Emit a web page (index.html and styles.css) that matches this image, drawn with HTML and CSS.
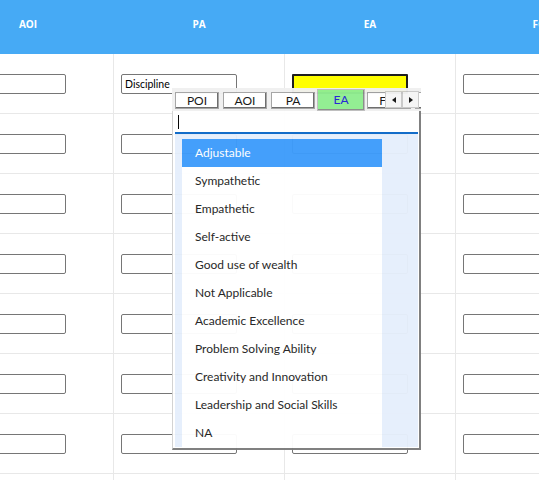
FILE: index.html
```html
<!DOCTYPE html>
<html>
<head>
<meta charset="utf-8">
<link rel="stylesheet" href="styles.css">
</head>
<body>
<div class="viewport">
  <div class="grid">
    <div class="hcell">AOI</div>
    <div class="hcell">PA</div>
    <div class="hcell">EA</div>
    <div class="hcell">FOI</div>

    <div class="cell"><div class="field"></div></div>
    <div class="cell"><div class="field">Discipline</div></div>
    <div class="cell"><div class="field field-active"></div></div>
    <div class="cell"><div class="field"></div></div>

    <div class="cell"><div class="field"></div></div>
    <div class="cell"><div class="field"></div></div>
    <div class="cell"><div class="field"></div></div>
    <div class="cell"><div class="field"></div></div>

    <div class="cell"><div class="field"></div></div>
    <div class="cell"><div class="field"></div></div>
    <div class="cell"><div class="field"></div></div>
    <div class="cell"><div class="field"></div></div>

    <div class="cell"><div class="field"></div></div>
    <div class="cell"><div class="field"></div></div>
    <div class="cell"><div class="field"></div></div>
    <div class="cell"><div class="field"></div></div>

    <div class="cell"><div class="field"></div></div>
    <div class="cell"><div class="field"></div></div>
    <div class="cell"><div class="field"></div></div>
    <div class="cell"><div class="field"></div></div>

    <div class="cell"><div class="field"></div></div>
    <div class="cell"><div class="field"></div></div>
    <div class="cell"><div class="field"></div></div>
    <div class="cell"><div class="field"></div></div>

    <div class="cell"><div class="field"></div></div>
    <div class="cell"><div class="field"></div></div>
    <div class="cell"><div class="field"></div></div>
    <div class="cell"><div class="field"></div></div>

    <div class="cell"><div class="field"></div></div>
    <div class="cell"><div class="field"></div></div>
    <div class="cell"><div class="field"></div></div>
    <div class="cell"><div class="field"></div></div>
  </div>

  <div class="popup">
    <div class="tabbar">
      <div class="tab">POI</div>
      <div class="tab">AOI</div>
      <div class="tab">PA</div>
      <div class="tab tab-selected">EA</div>
      <div class="tab">FOI</div>
      <div class="tab">POE</div>
      <div class="scroller">
        <div class="sbtn"><span class="tri tri-left"></span></div>
        <div class="sbtn"><span class="tri tri-right"></span></div>
      </div>
    </div>
    <div class="panel">
      <div class="search"><span class="caret"></span></div>
      <div class="list">
        <div class="item item-hl">Adjustable</div>
        <div class="item">Sympathetic</div>
        <div class="item">Empathetic</div>
        <div class="item">Self-active</div>
        <div class="item">Good use of wealth</div>
        <div class="item">Not Applicable</div>
        <div class="item">Academic Excellence</div>
        <div class="item">Problem Solving Ability</div>
        <div class="item">Creativity and Innovation</div>
        <div class="item">Leadership and Social Skills</div>
        <div class="item">NA</div>
      </div>
    </div>
  </div>
</div>
</body>
</html>
```

FILE: styles.css
```css
html, body {
  margin: 0;
  padding: 0;
  background: #fff;
  overflow: hidden;
}

.viewport {
  position: relative;
  width: 539px;
  height: 480px;
  overflow: hidden;
}

.grid {
  display: grid;
  grid-template-columns: repeat(4, 171px);
  margin-left: -58px;
  width: 684px;
}

.hcell {
  height: 54px;
  box-sizing: border-box;
  padding-top: 18px;
  padding-left: 1px;
  background: #46aaf5;
  color: #fff;
  font: bold 10px/12px "Open Sans", "DejaVu Sans", sans-serif;
  text-align: center;
}

.cell {
  height: 60px;
  box-sizing: border-box;
  border-left: 1px solid #e8e8e8;
  border-bottom: 1px solid #e8e8e8;
  padding-left: 7px;
  display: flex;
  align-items: center;
}

.field {
  width: 116px;
  height: 20px;
  box-sizing: border-box;
  border: 1px solid #767676;
  border-radius: 2px;
  background: #fff;
  padding-left: 3px;
  font: 10.5px/18px Lato, "Liberation Sans", sans-serif;
  color: #000;
}

.field-active {
  background: #ffff00;
  border: 2px solid #1e1e1e;
  border-radius: 1px;
}

/* popup */
.popup {
  position: absolute;
  left: 172px;
  top: 88px;
  width: 249px;
  opacity: 0.97;
}

.tabbar {
  position: relative;
  height: 23px;
  background: #f0f0f0;
  display: flex;
  align-items: flex-start;
  padding-left: 3px;
  overflow: hidden;
}

.tab {
  flex: none;
  width: 44px;
  height: 17px;
  margin-top: 4px;
  margin-right: 4px;
  box-sizing: border-box;
  border: 1px solid #a4a4a4;
  box-shadow: inset -1px -1px 0 #6a6a6a;
  background: #fff;
  font: 12px/15px Lato, "Noto Sans", sans-serif;
  color: #111;
  text-align: center;
}

.tab-selected {
  width: 48px;
  height: 22px;
  margin: 1px 2px 0 -2px;
  background: #90ee90;
  color: #2222d4;
  line-height: 20px;
  border-color: #bdbdbd;
  box-shadow: inset -1px -1px 0 #8a8a8a;
}

.scroller {
  position: absolute;
  right: 2px;
  top: 3px;
  display: flex;
  background: #f0f0f0;
}

.sbtn {
  width: 17px;
  height: 17px;
  box-sizing: border-box;
  border: 1px solid #c9c9c9;
  background: #f5f5f5;
  display: flex;
  align-items: center;
  justify-content: center;
}

.tri {
  width: 0;
  height: 0;
  border-top: 3px solid transparent;
  border-bottom: 3px solid transparent;
}

.tri-left {
  border-right: 4px solid #111;
}

.tri-right {
  border-left: 4px solid #111;
}

.panel {
  box-sizing: border-box;
  width: 249px;
  background: #fff;
  border-left: 1px solid #d2d2d2;
  border-right: 2px solid #7c7c7c;
  border-bottom: 2px solid #7c7c7c;
  padding: 0 1px 1px 2px;
}

.search {
  height: 21px;
  border-bottom: 2px solid #0b68c8;
  background: #fff;
  display: flex;
  align-items: flex-start;
}

.caret {
  width: 1px;
  height: 14px;
  margin: 4px 0 0 3px;
  background: #000;
}

.list {
  background: #e6effc;
  padding: 5px 0 0 7px;
}

.item {
  width: 200px;
  height: 28px;
  box-sizing: border-box;
  padding-left: 13px;
  background: #fff;
  font: 12px/28px Lato, "Noto Sans", sans-serif;
  color: #222;
}

.item-hl {
  background: #3e9cfb;
  color: #fff;
}
```
